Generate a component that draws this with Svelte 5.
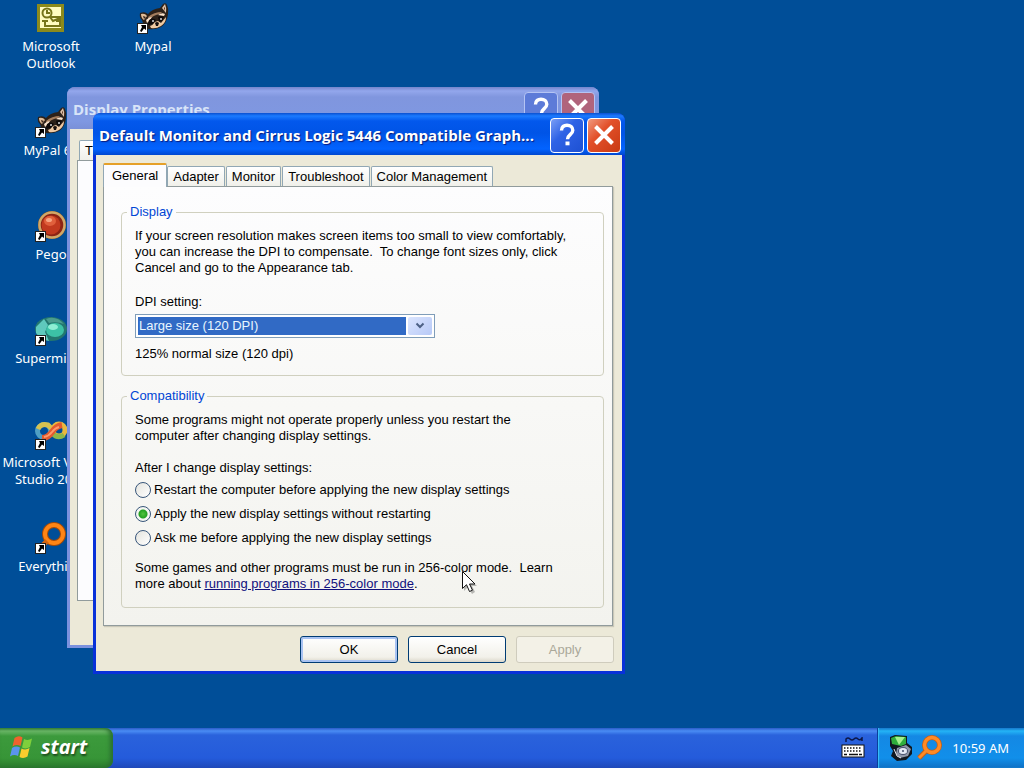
<script>
  const shortcuts = [
    { icon: 'outlook', label: 'Microsoft Outlook', link: false },
    { icon: 'raccoon', label: 'MyPal 68', link: true },
    { icon: 'pego', label: 'Pego', link: true },
    { icon: 'supermium', label: 'Supermium', link: true },
    { icon: 'studio', label: 'Microsoft Visual Studio 2005', link: true },
    { icon: 'search', label: 'Everything', link: true },
    { icon: 'raccoon', label: 'Mypal', link: true }
  ];

  const tabs = ['General', 'Adapter', 'Monitor', 'Troubleshoot', 'Color Management'];

  const restartOptions = [
    { value: 'restart', label: 'Restart the computer before applying the new display settings' },
    { value: 'apply', label: 'Apply the new display settings without restarting' },
    { value: 'ask', label: 'Ask me before applying the new display settings' }
  ];

  let activeTab = $state('General');
  let dpi = $state('120');
  let afterChange = $state('apply');
</script>

{#snippet captionButtons()}
  <div class="caption-buttons">
    <button class="caption-button help" aria-label="Help">
      <svg viewBox="0 0 32 32" width="32" height="32">
        <path d="M10.5 11.5C10.5 7.5 13 6.2 16 6.2c3.400 0 5.800 1.900 5.800 5 0 4.300-5.300 4.600-5.300 9" fill="none" stroke="#fff" stroke-width="3.400" />
        <rect x="14.500" y="22.500" width="4" height="3.800" fill="#fff" />
      </svg>
    </button>
    <button class="caption-button close" aria-label="Close">
      <svg viewBox="0 0 32 32" width="32" height="32">
        <path d="M7.500 7.500l17 17M24.500 7.500l-17 17" stroke="#fff" stroke-width="4" />
      </svg>
    </button>
  </div>
{/snippet}

{#snippet appIcon(name)}
  {#if name === 'outlook'}
    <rect x="3" y="4" width="27" height="28" fill="#8c8a1c" />
    <rect x="6" y="7" width="21" height="21" fill="#fffbc0" />
    <g fill="none" stroke="#77751a" stroke-width="2">
      <circle cx="13" cy="13" r="4.500" />
      <path d="M13 10v3h3M16 17h10v9H11v-5M16 17l3 4 7-3M8 21h6" />
    </g>
    <rect x="22" y="19" width="3" height="3" fill="#77751a" />
  {:else if name === 'raccoon'}
    <path d="M4 13q5-2 8 1 4-5 12-6l3-4q3-2 4 1 2 4 1 9-1 9-7 13-6 3-13 2-4-1-6-9-3-2-2-7z" fill="#2c2119" />
    <path d="M5 14q4-1 6 2l-3 4q-3-2-3-6z" fill="#e0bd98" />
    <path d="M7 16l3 1-2 2z" fill="#3b261b" />
    <path d="M26 8l3-4q2 4 1 9z" fill="#dfc2a8" />
    <path d="M28 8l1-1v4z" fill="#4f2b1d" />
    <path d="M12 17q6-5 14-5l-2 2q-7 1-11 6z" fill="#a37d5e" />
    <path d="M10 20q3-3 6-3l-2 3-3 3zM22 15q4-3 7-1l-1 2z" fill="#f8e2cc" />
    <path d="M13 20q4-3 7 0l-3 4-5 1zM22 17q3-2 6 0l-2 4-3 1z" fill="#0e0a0a" />
    <path d="M14 26q3-1 5-4l3-1 3 2 5-6q0 6-5 9-5 3-10 2z" fill="#efcaa3" />
    <path d="M19 23q2-2 4 0l-1 3h-2z" fill="#17100f" />
    <circle cx="17" cy="21" r="1" fill="#d8d8d8" />
    <circle cx="25" cy="19" r="1" fill="#d8d8d8" />
  {:else if name === 'pego'}
    <circle cx="18" cy="17" r="14" fill="#8b5a28" />
    <circle cx="18" cy="17" r="12.500" fill="#8b2314" stroke="#d0a868" stroke-width="2.500" />
    <circle cx="17" cy="17" r="9.500" fill="#c23a1f" />
    <ellipse cx="16" cy="13" rx="6" ry="5" fill="#e0603c" />
    <ellipse cx="15" cy="12" rx="3" ry="2" fill="#f8a684" />
  {:else if name === 'supermium'}
    <ellipse cx="17" cy="17" rx="16" ry="12" fill="#23776f" />
    <path d="M2 15l8-8 4 6-3 7 4 9-8-2-5-6z" fill="#5fc9bd" />
    <path d="M12 7q10-4 18 5-8-3-15-1z" fill="#4b9d8e" />
    <ellipse cx="21" cy="18" rx="9" ry="7" fill="#3cc2a6" />
    <ellipse cx="19" cy="15" rx="5" ry="3" fill="#8eeed4" />
  {:else if name === 'studio'}
    <circle cx="10" cy="15" r="6.500" fill="none" stroke="#4f9fc4" stroke-width="5" />
    <path d="M4 13q3-6 10-4l4 4" fill="none" stroke="#d6c250" stroke-width="5" />
    <circle cx="25" cy="14" r="6" fill="none" stroke="#e8b93e" stroke-width="5" />
    <path d="M19 18q5 5 11 1" fill="none" stroke="#8cb84a" stroke-width="5" />
    <path d="M8 22q6 0 10-6t10-7" fill="none" stroke="#e25a30" stroke-width="6" />
    <path d="M10 21q5-1 8-5t7-5" fill="none" stroke="#ff9a69" stroke-width="2" />
  {:else if name === 'search'}
    <circle cx="20" cy="14" r="9" fill="none" stroke="#a44a08" stroke-width="6" />
    <circle cx="20" cy="14" r="9" fill="none" stroke="#ff8515" stroke-width="4" />
    <path d="M13 21L4 30" stroke="#d46610" stroke-width="5" />
  {/if}
{/snippet}

<div class="screen">
  <main class="desktop">
    <ul class="shortcuts">
      {#each shortcuts as item}
        <li class="shortcut">
          <svg viewBox="0 0 34 34" width="34" height="34" aria-hidden="true">
            {@render appIcon(item.icon)}
            {#if item.link}
              <rect x="1.500" y="23.500" width="10" height="10" fill="#fff" stroke="#222" stroke-width="1" />
              <path d="M5 25h5v5L8 28.500 5.500 32 4 31l2-4z" fill="#000" />
            {/if}
          </svg>
          <span>{item.label}</span>
        </li>
      {/each}
    </ul>

    <section class="window display-window">
      <header class="title-bar">
        <h2>Display Properties</h2>
        {@render captionButtons()}
      </header>
      <div class="window-body">
        <div class="tabs">
          <button class="tab">Themes</button>
        </div>
        <div class="back-panel"></div>
      </div>
    </section>

    <section class="window monitor-window active">
      <header class="title-bar">
        <h1>Default Monitor and Cirrus Logic 5446 Compatible Graph...</h1>
        {@render captionButtons()}
      </header>
      <div class="window-body">
        <div class="tabs" role="tablist">
          {#each tabs as tab}
            <button
              class="tab"
              class:selected={activeTab === tab}
              role="tab"
              aria-selected={activeTab === tab}
              onclick={() => (activeTab = tab)}>{tab}</button>
          {/each}
        </div>

        <div class="panel" role="tabpanel">
          <fieldset>
            <legend>Display</legend>
            <p>
              If your screen resolution makes screen items too small to view comfortably,<br />
              you can increase the DPI to compensate.&nbsp; To change font sizes only, click<br />
              Cancel and go to the Appearance tab.
            </p>
            <label class="dpi-label" for="dpi">DPI setting:</label>
            <div class="select-box">
              <select id="dpi" bind:value={dpi}>
                <option value="96">Normal size (96 DPI)</option>
                <option value="120">Large size (120 DPI)</option>
              </select>
              <span class="arrow">
                <svg viewBox="0 0 10 8" width="10" height="8"><path d="M1.500 1.500L5 5l3.500-3.500" fill="none" stroke="#4d6185" stroke-width="2" /></svg>
              </span>
            </div>
            <p class="dpi-note">125% normal size (120 dpi)</p>
          </fieldset>

          <fieldset class="compatibility">
            <legend>Compatibility</legend>
            <p>
              Some programs might not operate properly unless you restart the<br />
              computer after changing display settings.
            </p>
            <p class="question">After I change display settings:</p>
            {#each restartOptions as option}
              <label class="radio">
                <input type="radio" name="after-change" value={option.value} bind:group={afterChange} />
                {option.label}
              </label>
            {/each}
            <p class="more">
              Some games and other programs must be run in 256-color mode.&nbsp; Learn<br />
              more about <a href="#compat">running programs in 256-color mode</a>.
            </p>
          </fieldset>
        </div>

        <footer class="actions">
          <button class="push default">OK</button>
          <button class="push">Cancel</button>
          <button class="push" disabled>Apply</button>
        </footer>
      </div>
    </section>

    <svg class="cursor" viewBox="0 0 16 24" width="16" height="24" aria-hidden="true">
      <path d="M2 2v18l4-4 4 7 3-2-3-6h5z" fill="#000" opacity="0.25" />
      <path d="M.5.500v17l4-3.800 3 6.800 3-1.300-3-6.200h5.500z" fill="#fff" stroke="#111" />
    </svg>
  </main>

  <nav class="taskbar">
    <button class="start">
      <svg viewBox="0 0 24 24" width="24" height="24" aria-hidden="true">
        <path d="M4.500 3q4-3 8-.5l-2 8.500q-4-2-8 .5z" fill="#f0622d" />
        <path d="M14 4q4 2 8-.5l-2 8.500q-4 2.500-8 .5z" fill="#7fcf3c" />
        <path d="M2 13q4-2.500 8-.5l-2 8.500q-4-2-8 .5z" fill="#5a94ee" />
        <path d="M11.500 13.500q4 2 8-.5l-2 8.500q-4 2.500-8 .5z" fill="#f8cd2e" />
      </svg>
      <span>start</span>
    </button>
    <div class="language">
      <svg viewBox="0 0 24 22" width="24" height="22" aria-hidden="true">
        <path d="M5 5V2q2-2 4 0t4 0 4 0 4-1v3" fill="none" stroke="#0b1648" stroke-width="1.500" />
        <rect x="1" y="8" width="22" height="12" fill="#fff" stroke="#111" />
        <path d="M3 11h18M3 14h18" stroke="#111" stroke-width="1.500" stroke-dasharray="1.500 1.500" />
        <path d="M3 17.500h3M8 17.500h9M18 17.500h3" stroke="#111" stroke-width="1.500" />
      </svg>
    </div>
    <div class="tray">
      <svg viewBox="0 0 26 28" width="26" height="28" aria-hidden="true">
        <path d="M2 3l5-2 12 1v7l5 4v7l-6 6-9 1-6-5 2-5-3-5z" fill="#101820" />
        <path d="M3 4l5-2 10 1v7l-5 2-9-2z" fill="#2fae3c" />
        <path d="M7 3l4 8 6-8z" fill="#a4f08c" />
        <path d="M9 14l9-3 5 4-3 7-8 2-4-4z" fill="#8f97a8" />
        <ellipse cx="15" cy="17" rx="4.500" ry="3.500" fill="#e4e9f4" stroke="#46506c" />
        <circle cx="15" cy="17" r="1" fill="#46506c" />
        <path d="M6 15l3 7 4 2" fill="none" stroke="#e8e8f0" />
      </svg>
      <svg viewBox="0 0 26 26" width="26" height="26" aria-hidden="true">
        <path d="M12 14L3 23" stroke="#c45f16" stroke-width="5" />
        <circle cx="16" cy="10" r="7.500" fill="none" stroke="#c45f16" stroke-width="5" />
        <circle cx="16" cy="10" r="7.500" fill="none" stroke="#ff8a25" stroke-width="3.500" />
        <path d="M11 15L3 23" stroke="#ff8a25" stroke-width="3" />
      </svg>
      <time>10:59 AM</time>
    </div>
  </nav>
</div>

<style>
  :global(body) {
    margin: 0;
    background: #004e98;
  }

  .screen {
    display: flex;
    flex-direction: column;
    min-height: 100vh;
    overflow: hidden;
    background: #004e98;
    font-family: "Liberation Sans", Arial, sans-serif;
    font-size: 13px;
    line-height: 16px;
    color: #000;
  }

  button,
  select {
    font: inherit;
    color: inherit;
  }

  p {
    margin: 0;
    white-space: nowrap;
  }

  .desktop {
    position: relative;
    flex: 1;
    min-height: 680px;
  }

  /* Desktop icons */
  .shortcuts {
    display: grid;
    grid-template-rows: repeat(6, 104px);
    grid-auto-columns: 102px;
    grid-auto-flow: column;
    justify-content: start;
    margin: 0;
    padding: 0;
    list-style: none;
  }

  .shortcut {
    display: flex;
    flex-direction: column;
    align-items: center;
    gap: 4px;
    color: #fff;
    font-family: "Noto Sans", Tahoma, sans-serif;
    line-height: 17px;
    text-align: center;
  }

  /* Windows */
  .window {
    position: absolute;
    box-sizing: border-box;
    width: 532px;
    padding: 0 3px 3px;
    border-radius: 8px 8px 0 0;
    background: #7b91de;
    overflow: hidden;
  }

  .display-window {
    left: 67px;
    top: 87px;
  }

  .monitor-window {
    left: 93px;
    top: 113px;
  }

  .title-bar {
    display: flex;
    align-items: center;
    justify-content: space-between;
    box-sizing: border-box;
    height: 42px;
    margin: 0 -3px;
    padding: 2px 4px 0 6px;
    background: linear-gradient(#7385cc, #93a7ec 4px, #8096de 10px, #7f98e2 34px, #7a90d8);
    color: #d8e4f8;
  }

  .title-bar h1,
  .title-bar h2 {
    margin: 0;
    font-family: "Open Sans", "Trebuchet MS", sans-serif;
    font-size: 15px;
    font-weight: 700;
    line-height: 20px;
    white-space: nowrap;
  }

  .active {
    background: #0831d9;
  }

  .active .title-bar {
    background: linear-gradient(#0a50d0, #1c7bff 3px, #0358ec 8px, #0054e6 20px, #0263ff 36px, #0047cf);
    color: #fff;
    text-shadow: 1px 1px 1px #0a1c7c;
  }

  .caption-buttons {
    display: flex;
    gap: 3px;
  }

  .caption-button {
    box-sizing: border-box;
    width: 34px;
    height: 35px;
    padding: 0;
    border: 1px solid #b5c4f3;
    border-radius: 4px;
    background: #5d7bd8;
  }

  .caption-button svg {
    display: block;
  }

  .caption-button.close {
    background: #b0647c;
  }

  .active .caption-button {
    border-color: #fff;
    background: linear-gradient(135deg, #7b9ef5, #2f63e6 40%, #1d50d2);
  }

  .active .caption-button.close {
    background: linear-gradient(135deg, #f09a80, #e2502a 40%, #c93a12);
  }

  .window-body {
    padding: 8px 9px 8px 7px;
    background: #ece9d8;
  }

  /* Tabs */
  .tabs {
    display: flex;
    align-items: flex-end;
    gap: 1px;
    height: 23px;
  }

  .tab {
    box-sizing: border-box;
    height: 20px;
    padding: 0 5px;
    border: 1px solid #91a7b4;
    border-bottom: 0;
    border-radius: 2px 2px 0 0;
    background: linear-gradient(#fff, #f0f0ea);
    white-space: nowrap;
  }

  .tab.selected {
    position: relative;
    z-index: 1;
    height: 24px;
    margin: 0 -1px -1px 0;
    padding: 0 8px;
    border-top: 2px solid #e5a028;
    background: #fcfcfe;
  }

  .panel {
    padding: 17px 8px 17px 17px;
    border: 1px solid #919b9c;
    background: linear-gradient(#fdfdfe, #f3f3ee);
    box-shadow: 1px 1px 1px #c9c7b8;
  }

  .display-window .tabs {
    padding-left: 2px;
  }

  .back-panel {
    height: 439px;
    border: 1px solid #919b9c;
    background: #fcfcfe;
  }

  .display-window .window-body {
    padding: 8px 7px 44px;
  }

  fieldset {
    min-width: 0;
    margin: 0;
    padding: 8px 13px 13px;
    border: 1px solid #d0d0bf;
    border-radius: 4px;
  }

  legend {
    margin-left: -8px;
    padding: 0 3px;
    color: #0046d5;
  }

  .compatibility {
    margin-top: 12px;
    padding-bottom: 15px;
  }

  .dpi-label {
    display: block;
    margin: 18px 0 4px;
  }

  .select-box {
    display: flex;
    gap: 2px;
    box-sizing: border-box;
    width: 300px;
    height: 24px;
    padding: 2px;
    border: 1px solid #7f9db9;
    background: #fff;
  }

  .select-box select {
    flex: 1;
    appearance: none;
    padding: 0 1px;
    border: 0;
    border-radius: 0;
    outline: 0;
    background: #316ac5;
    color: #e8f6ff;
  }

  .arrow {
    display: flex;
    align-items: center;
    justify-content: center;
    width: 24px;
    border-radius: 2px;
    background: linear-gradient(135deg, #dbe5fe, #b7c9f7);
  }

  .dpi-note {
    margin-top: 8px;
  }

  .question {
    margin: 16px 0 2px;
  }

  .radio {
    display: flex;
    align-items: center;
    gap: 3px;
    height: 24px;
  }

  .radio input {
    appearance: none;
    box-sizing: border-box;
    width: 16px;
    height: 16px;
    margin: 0;
    border: 1px solid #38567a;
    border-radius: 50%;
    background: linear-gradient(135deg, #e4e4de, #fff);
  }

  .radio input:checked {
    background: radial-gradient(circle, #52c43f 0, #22a122 4px, #f4f6f2 5px);
  }

  .more {
    margin-top: 10px;
  }

  a {
    color: #10107c;
  }

  .actions {
    display: flex;
    justify-content: flex-end;
    gap: 10px;
    margin: 10px -1px 0 0;
  }

  .push {
    box-sizing: border-box;
    width: 98px;
    height: 27px;
    padding: 0;
    border: 1px solid #003c74;
    border-radius: 3px;
    background: linear-gradient(#fff, #f2f1ea 80%, #dcd8cb);
  }

  .push.default {
    box-shadow: inset 0 0 0 2px #a9c3f2;
  }

  .push:disabled {
    border-color: #cfccbd;
    background: #f3f1e7;
    color: #aaa899;
  }

  .cursor {
    position: absolute;
    left: 462px;
    top: 571px;
  }

  /* Taskbar */
  .taskbar {
    display: flex;
    height: 40px;
    background: linear-gradient(#2a5bc8, #4a8cf4 3px, #2a62dc 7px, #245bdb 30px, #1f48b8);
  }

  .start {
    display: flex;
    align-items: center;
    gap: 7px;
    width: 113px;
    padding: 0 0 2px 10px;
    border: 0;
    border-radius: 0 8px 8px 0;
    background: linear-gradient(#3d8a3c, #6cb868 3px, #3c9a3c 8px, #379537 30px, #2a7a2c);
    box-shadow: inset -3px 0 4px #2a7030;
    color: #fff;
    font-family: "Open Sans", "Trebuchet MS", sans-serif;
    font-size: 20px;
    font-style: italic;
    font-weight: 700;
    line-height: 24px;
    text-shadow: 1px 2px 2px #1c4a1c;
  }

  .language {
    display: flex;
    align-items: center;
    margin-left: auto;
    padding-right: 12px;
  }

  .tray {
    display: flex;
    align-items: center;
    gap: 2px;
    padding: 0 15px 0 10px;
    border-left: 1px solid #0a3f9c;
    background: linear-gradient(#1270c8, #24b4f6 3px, #1488e4 8px, #118fea 30px, #0f70c4);
    box-shadow: inset 1px 0 1px #3cc0fa;
  }

  .tray time {
    margin-left: 8px;
    color: #fff;
    font-family: "Noto Sans", Tahoma, sans-serif;
  }
</style>
